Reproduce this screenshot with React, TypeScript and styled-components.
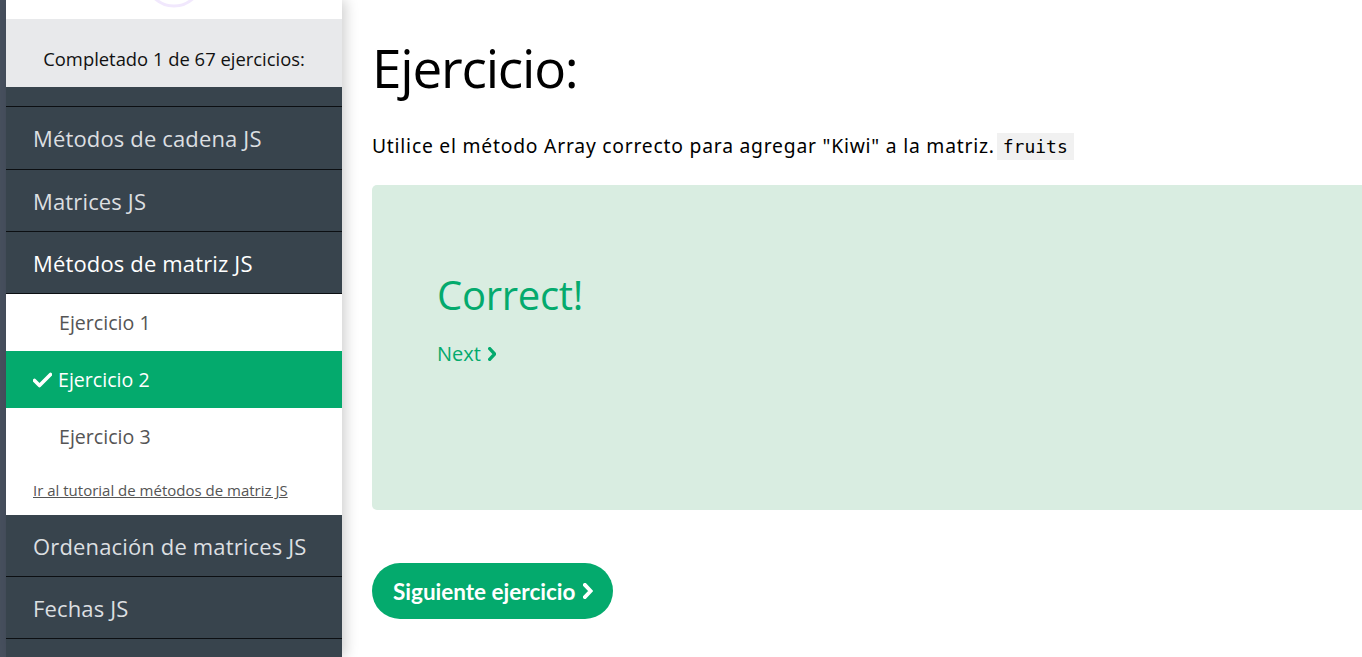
import React from "react";
import styled, { createGlobalStyle } from "styled-components";

const Global = createGlobalStyle`
  html, body { margin: 0; padding: 0; height: 100%; overflow: hidden; background: #fff; }
  body { font-family: "Open Sans", "Noto Sans", sans-serif; }
  #root { height: 100%; }
`;

const Page = styled.div`
  display: flex;
  height: 657px;
  background: #fff;
`;

const Stripe = styled.div`
  width: 6px;
  flex: none;
  background: #47505e;
`;

const Sidebar = styled.aside`
  width: 336px;
  flex: none;
  display: flex;
  flex-direction: column;
  background: #38444d;
  box-shadow: 4px 0 12px rgba(0, 0, 0, 0.18);
  position: relative;
  z-index: 1;
  overflow: hidden;
  & > * { flex: none; }
`;

const TopWhite = styled.div`
  height: 19px;
  background: #fff;
  overflow: hidden;
  display: flex;
  justify-content: center;
`;

const Progress = styled.div`
  height: 68px;
  background: #e8e9eb;
  display: flex;
  align-items: center;
  justify-content: center;
  padding-top: 10px;
  box-sizing: border-box;
  font-size: 18.4px;
  color: #111;
`;

const Spacer = styled.div`
  height: 19px;
  border-bottom: 1px solid #0c0f12;
`;

const MenuItem = styled.div<{ $active?: boolean; $tall?: boolean }>`
  height: ${(p) => (p.$tall ? "62px" : "61px")};
  display: flex;
  align-items: center;
  padding-left: 27px;
  font-size: 22px;
  letter-spacing: 0.15px;
  color: ${(p) => (p.$active ? "#ffffff" : "#dcdfe1")};
  border-bottom: 1px solid #0c0f12;
`;

const SubMenu = styled.div`
  background: #fff;
  display: flex;
  flex-direction: column;
  height: 221px;
  & > * { flex: none; }
`;

const SubItem = styled.div<{ $done?: boolean }>`
  height: 57px;
  display: flex;
  align-items: center;
  padding-left: ${(p) => (p.$done ? "27px" : "53px")};
  gap: 6px;
  font-size: 19.6px;
  color: ${(p) => (p.$done ? "#fff" : "#555")};
  background: ${(p) => (p.$done ? "#04aa6d" : "#fff")};
`;

const TutLink = styled.a`
  margin-top: 15px;
  margin-left: 27px;
  font-size: 15px;
  line-height: 20px;
  color: #555;
  text-decoration: underline;
`;

const Main = styled.main`
  flex: 1;
  padding-left: 30px;
  display: flex;
  flex-direction: column;
  min-width: 0;
  & > * { flex: none; }
`;

const Title = styled.h1`
  margin: 30px 0 0 0;
  font-weight: 400;
  font-size: 53px;
  line-height: 76px;
  color: #000;
  letter-spacing: -1.2px;
`;

const Prompt = styled.p`
  margin: 27px 0 0 0;
  font-family: "Noto Sans", "Open Sans", sans-serif;
  font-size: 19.3px;
  letter-spacing: 0.78px;
  line-height: 26px;
  height: 26px;
  color: #000;
  white-space: nowrap;
`;

const Code = styled.code`
  font-family: "DejaVu Sans Mono", "Liberation Mono", monospace;
  font-size: 18px;
  letter-spacing: 0;
  background: #f1f1f1;
  padding: 3px 6px;
  margin-left: 2px;
`;

const ResultBox = styled.div`
  margin-top: 26px;
  height: 325px;
  background: #d9ede1;
  border-radius: 5px 0 0 5px;
  padding: 84px 0 0 65px;
  box-sizing: border-box;
  color: #04aa6d;
`;

const Correct = styled.div`
  font-size: 40px;
  line-height: 52px;
  letter-spacing: -0.3px;
`;

const NextLink = styled.div`
  margin-top: 19px;
  font-size: 20px;
  display: flex;
  align-items: center;
  gap: 7px;
`;

const NextButton = styled.button`
  margin-top: 53px;
  align-self: flex-start;
  height: 56px;
  padding: 0 20px 0 21px;
  border: none;
  border-radius: 28px;
  background: #04aa6d;
  color: #fff;
  font-family: "Lato", "Open Sans", sans-serif;
  font-weight: 700;
  font-size: 22.5px;
  display: flex;
  align-items: center;
  gap: 8px;
`;

const Chevron = ({ size = 12, weight = 2.2 }: { size?: number; weight?: number }) => (
  <svg width={size * 0.6} height={size} viewBox="0 0 6 10" fill="none">
    <path d="M1.2 1.2l3.6 3.8-3.6 3.8" stroke="currentColor" strokeWidth={weight} strokeLinecap="square" strokeLinejoin="miter" />
  </svg>
);

const Check = () => (
  <svg width="19" height="16" viewBox="0 0 19 16">
    <path d="M1.5 8.5l5 5L17.5 2.5" stroke="#fff" strokeWidth="3.6" fill="none" strokeLinecap="round" strokeLinejoin="round" />
  </svg>
);

export default function App() {
  return (
    <>
      <Global />
      <Page>
        <Stripe />
        <Sidebar>
          <TopWhite>
            <svg width="80" height="19" viewBox="0 0 80 19">
              <circle cx="40" cy="-22" r="28" stroke="#f1e8fd" strokeWidth="3" fill="none" />
            </svg>
          </TopWhite>
          <Progress>Completado 1 de 67 ejercicios:</Progress>
          <Spacer />
          <MenuItem $tall>Métodos de cadena JS</MenuItem>
          <MenuItem>Matrices JS</MenuItem>
          <MenuItem $active>Métodos de matriz JS</MenuItem>
          <SubMenu>
            <SubItem>Ejercicio 1</SubItem>
            <SubItem $done>
              <Check />
              Ejercicio 2
            </SubItem>
            <SubItem>Ejercicio 3</SubItem>
            <TutLink>Ir al tutorial de métodos de matriz JS</TutLink>
          </SubMenu>
          <MenuItem>Ordenación de matrices JS</MenuItem>
          <MenuItem>Fechas JS</MenuItem>
          <MenuItem />
        </Sidebar>
        <Main>
          <Title>Ejercicio:</Title>
          <Prompt>
            Utilice el método Array correcto para agregar "Kiwi" a la matriz.<Code>fruits</Code>
          </Prompt>
          <ResultBox>
            <Correct>Correct!</Correct>
            <NextLink>
              Next <Chevron size={14} weight={2.4} />
            </NextLink>
          </ResultBox>
          <NextButton>
            Siguiente ejercicio <Chevron size={16} weight={2.4} />
          </NextButton>
        </Main>
      </Page>
    </>
  );
}
